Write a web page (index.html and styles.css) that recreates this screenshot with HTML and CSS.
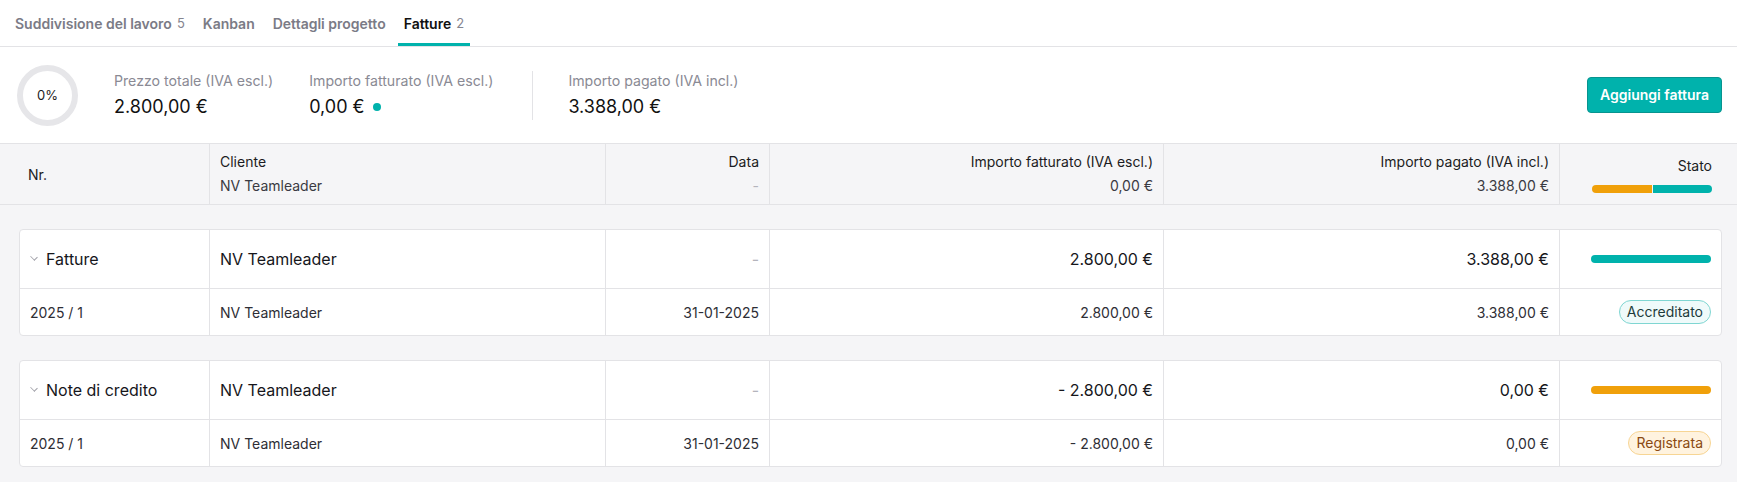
FILE: index.html
```html
<!DOCTYPE html>
<html lang="it">
<head>
  <meta charset="UTF-8" />
  <meta name="viewport" content="width=device-width, initial-scale=1" />
  <title>Fatture progetto</title>
  <link rel="stylesheet" href="styles.css">
</head>
<body>

<nav class="tabs">
  <a class="tab">Suddivisione del lavoro <span class="tab-count">5</span></a>
  <a class="tab">Kanban</a>
  <a class="tab">Dettagli progetto</a>
  <a class="tab active">Fatture <span class="tab-count">2</span></a>
</nav>

<section class="summary">
  <div class="progress-ring">0%</div>
  <div class="summary-item">
    <div class="summary-label">Prezzo totale (IVA escl.)</div>
    <div class="summary-value">2.800,00 €</div>
  </div>
  <div class="summary-item">
    <div class="summary-label">Importo fatturato (IVA escl.)</div>
    <div class="summary-value">0,00 € <span class="dot"></span></div>
  </div>
  <div class="summary-item divided">
    <div class="summary-label">Importo pagato (IVA incl.)</div>
    <div class="summary-value">3.388,00 €</div>
  </div>
  <button class="btn-primary">Aggiungi fattura</button>
</section>

<div class="thead">
  <div class="cell">Nr.</div>
  <div class="cell stack">
    <span>Cliente</span>
    <span class="sub">NV Teamleader</span>
  </div>
  <div class="cell stack right">
    <span>Data</span>
    <span class="muted">-</span>
  </div>
  <div class="cell stack right">
    <span>Importo fatturato (IVA escl.)</span>
    <span class="sub">0,00 €</span>
  </div>
  <div class="cell stack right">
    <span>Importo pagato (IVA incl.)</span>
    <span class="sub">3.388,00 €</span>
  </div>
  <div class="cell stack right">
    <span>Stato</span>
    <span class="bar split"><i class="orange"></i><i class="teal"></i></span>
  </div>
</div>

<!-- Fatture -->
<div class="group">
  <div class="row group-row">
    <div class="cell"><span class="chevron"></span>Fatture</div>
    <div class="cell">NV Teamleader</div>
    <div class="cell right muted">-</div>
    <div class="cell right">2.800,00 €</div>
    <div class="cell right">3.388,00 €</div>
    <div class="cell right"><span class="bar teal"></span></div>
  </div>
  <div class="row item-row">
    <div class="cell">2025 / 1</div>
    <div class="cell">NV Teamleader</div>
    <div class="cell right">31-01-2025</div>
    <div class="cell right">2.800,00 €</div>
    <div class="cell right">3.388,00 €</div>
    <div class="cell right"><span class="badge credited">Accreditato</span></div>
  </div>
</div>

<!-- Note di credito -->
<div class="group">
  <div class="row group-row">
    <div class="cell"><span class="chevron"></span>Note di credito</div>
    <div class="cell">NV Teamleader</div>
    <div class="cell right muted">-</div>
    <div class="cell right">- 2.800,00 €</div>
    <div class="cell right">0,00 €</div>
    <div class="cell right"><span class="bar orange"></span></div>
  </div>
  <div class="row item-row">
    <div class="cell">2025 / 1</div>
    <div class="cell">NV Teamleader</div>
    <div class="cell right">31-01-2025</div>
    <div class="cell right">- 2.800,00 €</div>
    <div class="cell right">0,00 €</div>
    <div class="cell right"><span class="badge booked">Registrata</span></div>
  </div>
</div>

</body>
</html>
```

FILE: styles.css
```css
  body {
    font-family: Inter, 'Noto Sans', sans-serif;
    background: #f5f5f7;
    color: #1c1c22;
    margin: 0; padding: 0;
    font-size: 14px;
  }

  /* Tabs */
  .tabs {
    display: flex;
    gap: 6px;
    padding-left: 9px;
    height: 46px;
    background: #fff;
    border-bottom: 1px solid #e3e3e6;
  }
  .tab {
    display: flex;
    align-items: center;
    padding: 0 6px;
    font-size: 14px;
    font-weight: 600;
    color: #7b7b86;
    border-bottom: 3px solid transparent;
    padding-top: 3px;
    box-sizing: border-box;
  }
  .tab.active {
    color: #111;
    border-bottom-color: #00b2ac;
  }
  .tab-count {
    font-weight: 400;
    color: #85858f;
    margin-left: 5px;
    font-size: 13px;
  }

  /* Sommario */
  .summary {
    display: flex;
    align-items: center;
    gap: 36px;
    height: 96px;
    padding: 0 15px 0 17px;
    background: #fff;
  }
  .progress-ring {
    width: 61px;
    height: 61px;
    box-sizing: border-box;
    border: 6px solid #e6e6e9;
    border-radius: 50%;
    display: flex;
    align-items: center;
    justify-content: center;
    font-size: 13px;
    color: #1c1c22;
  }
  .summary-item.divided {
    border-left: 1px solid #e3e3e6;
    padding-left: 35px;
    margin-left: 3px;
  }
  .summary-label {
    font-size: 14.15px;
    line-height: 20px;
    color: #8a8a94;
  }
  .summary-value {
    font-size: 18px;
    line-height: 26px;
    margin-top: 3px;
    color: #111;
    display: flex;
    align-items: center;
    gap: 8px;
  }
  .dot {
    width: 8px;
    height: 8px;
    border-radius: 50%;
    background: #00b2ac;
  }
  .btn-primary {
    margin-left: auto;
    height: 36px;
    padding: 0 12px;
    font-family: inherit;
    font-size: 14px;
    font-weight: 600;
    color: #fff;
    background: #00b2ac;
    border: 1px solid #07948f;
    border-radius: 4px;
    margin-top: -1px;
  }

  /* Tabella */
  .thead, .row {
    display: grid;
  }
  .thead {
    grid-template-columns: 190px 396px 164px 394px 396px 1fr;
    padding: 0 15px 0 19px;
    height: 60px;
    border-top: 1px solid #e3e3e6;
    border-bottom: 1px solid #e3e3e6;
    color: #1c1c22;
  }
  .row {
    grid-template-columns: 189px 396px 164px 394px 396px 1fr;
  }
  .cell {
    display: flex;
    align-items: center;
    padding: 0 10px;
    min-width: 0;
    white-space: nowrap;
  }
  .cell + .cell {
    border-left: 1px solid #e3e3e6;
  }
  .thead .cell:first-child {
    padding-left: 9px;
  }
  .cell.right {
    justify-content: flex-end;
  }
  .cell.stack {
    flex-direction: column;
    justify-content: center;
    align-items: flex-start;
    line-height: 24px;
  }
  .cell.stack.right {
    align-items: flex-end;
  }
  .sub {
    color: #3a3a42;
  }
  .muted {
    color: #b4b4bc;
  }

  .group {
    margin: 24px 15px 0 19px;
    background: #fff;
    border: 1px solid #e3e3e6;
    border-radius: 4px;
  }
  .group-row {
    height: 58px;
    border-bottom: 1px solid #e3e3e6;
    font-size: 16px;
    color: #16161b;
  }
  .item-row {
    height: 46px;
    color: #2e2e35;
  }
  .chevron {
    width: 5px;
    height: 5px;
    border-right: 1.3px solid #a0a0a8;
    border-bottom: 1.3px solid #a0a0a8;
    transform: rotate(45deg) scaleY(0.8);
    margin: -4px 9px 0 1px;
  }

  /* Barre di stato */
  .bar {
    display: flex;
    width: 120px;
    height: 8px;
    border-radius: 4px;
    overflow: hidden;
    gap: 1px;
  }
  .bar.split {
    margin-top: 7px;
    margin-bottom: 2px;
    line-height: 0;
  }
  .bar i {
    flex: 1;
  }
  .teal { background: #00b2ac; }
  .orange { background: #f0a00a; }

  .badge {
    display: inline-block;
    padding: 0 7px;
    line-height: 22px;
    border-radius: 12px;
    font-size: 14px;
  }
  .badge.credited {
    background: #effafa;
    border: 1px solid #7fd6d2;
    color: #1d3b3b;
  }
  .badge.booked {
    background: #fff3df;
    border: 1px solid #f7d594;
    color: #8a4a12;
  }
```
